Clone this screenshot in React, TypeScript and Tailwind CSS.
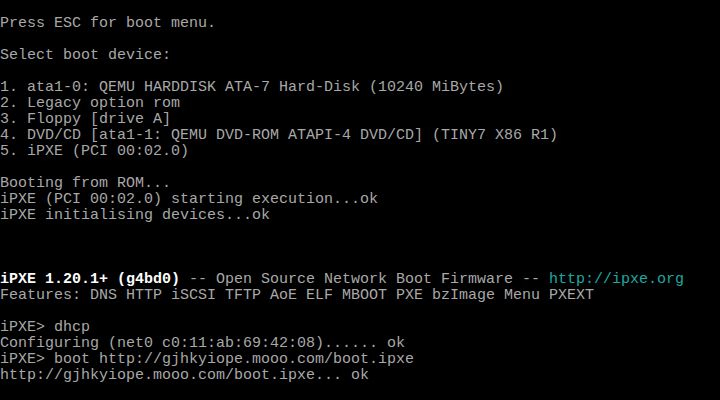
const rows: React.ReactNode[] = [
  "",
  "Press ESC for boot menu.",
  "",
  "Select boot device:",
  "",
  "1. ata1-0: QEMU HARDDISK ATA-7 Hard-Disk (10240 MiBytes)",
  "2. Legacy option rom",
  "3. Floppy [drive A]",
  "4. DVD/CD [ata1-1: QEMU DVD-ROM ATAPI-4 DVD/CD] (TINY7 X86 R1)",
  "5. iPXE (PCI 00:02.0)",
  "",
  "Booting from ROM...",
  "iPXE (PCI 00:02.0) starting execution...ok",
  "iPXE initialising devices...ok",
  "",
  "",
  "",
  <>
    <span className="font-bold text-[#fcfcfc]">iPXE 1.20.1+ (g4bd0)</span>
    {" -- Open Source Network Boot Firmware -- "}
    <span className="text-[#1fa8a0]">http://ipxe.org</span>
  </>,
  "Features: DNS HTTP iSCSI TFTP AoE ELF MBOOT PXE bzImage Menu PXEXT",
  "",
  "iPXE> dhcp",
  "Configuring (net0 c0:11:ab:69:42:08)...... ok",
  "iPXE> boot http://gjhkyiope.mooo.com/boot.ipxe",
  "http://gjhkyiope.mooo.com/boot.ipxe... ok",
  "",
];

export default function App() {
  return (
    <div className="w-[720px] h-[400px] bg-black overflow-hidden text-[#a8a8a8] font-['Liberation_Mono',monospace] text-[15px]">
      {rows.map((r, i) => (
        <div key={i} className="h-[16px] leading-[16px] whitespace-pre">
          {r}
        </div>
      ))}
    </div>
  );
}
